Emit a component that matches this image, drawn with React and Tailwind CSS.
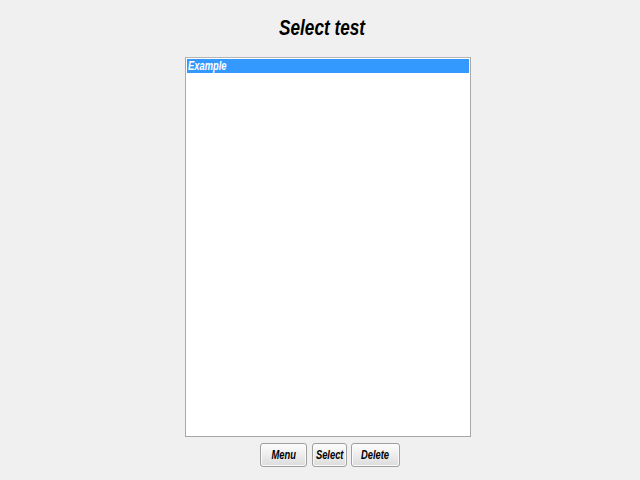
import React from 'react';

const font = { fontFamily: '"Liberation Sans Narrow", "Liberation Sans", Arial, sans-serif' };

// no narrow face installed, so squeeze Liberation Sans horizontally
function Narrow({ children, origin = 'origin-center' }) {
  return <span className={`inline-block scale-x-[0.78] ${origin}`}>{children}</span>;
}

function Button({ label, width }) {
  return (
    <button
      className={`h-[24px] ${width} rounded-[3px] border border-[#a0a0a0] bg-gradient-to-b from-[#fdfdfd] to-[#dcdcdc] text-[12px] font-bold italic text-black shadow-[inset_0_0_0_1px_#fafafa] flex items-center justify-center whitespace-nowrap`}
      style={font}
    >
      <Narrow>{label}</Narrow>
    </button>
  );
}

export default function App() {
  return (
    <div className="w-[640px] h-[480px] bg-[#f0f0f0] flex flex-col items-center pl-[16px]" style={font}>
      <h1 className="mt-[14px] mr-[12px] h-[28px] text-[22px] leading-[28px] font-bold italic text-black whitespace-nowrap">
        <Narrow>Select test</Narrow>
      </h1>

      {/* test list */}
      <div className="mt-[15px] w-[286px] h-[380px] bg-white border border-[#a8a8a8] border-t-[#b4b4b4] p-px">
        <div className="h-[14px] bg-[#3399ff] text-white text-[12px] leading-[14px] font-bold italic px-[1px] whitespace-nowrap">
          <Narrow origin="origin-left">Example</Narrow>
        </div>
      </div>

      <div className="mt-[6px] ml-[4px] flex">
        <Button label="Menu" width="w-[47px]" />
        <div className="w-[5px]" />
        <Button label="Select" width="w-[35px]" />
        <div className="w-[4px]" />
        <Button label="Delete" width="w-[49px]" />
      </div>
    </div>
  );
}
